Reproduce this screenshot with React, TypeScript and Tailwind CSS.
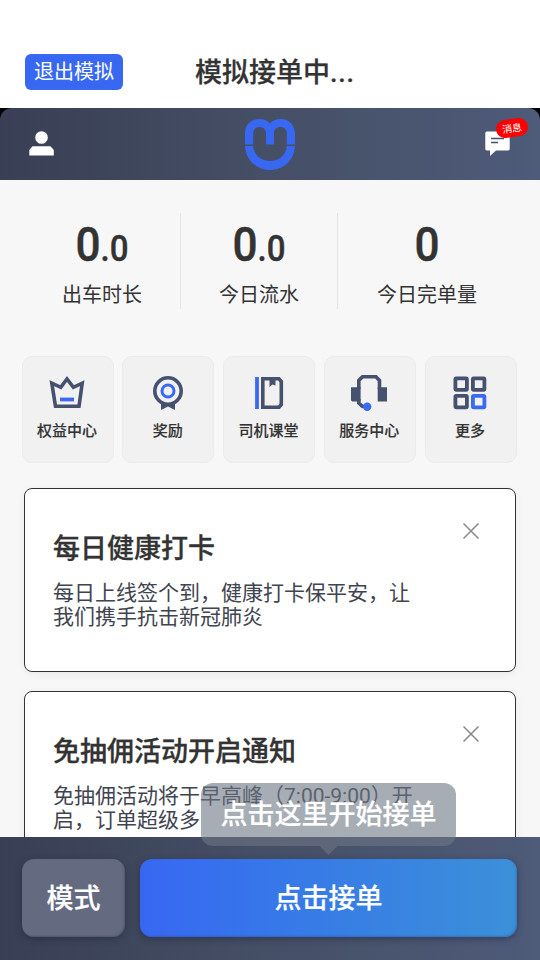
import type { ReactNode } from "react";

const stats = [
  { whole: "0", fraction: ".0", label: "出车时长" },
  { whole: "0", fraction: ".0", label: "今日流水" },
  { whole: "0", fraction: "", label: "今日完单量" },
];

const CrownIcon = () => (
  <svg width="36" height="38" viewBox="0 0 36 38" fill="none">
    <path d="M2.8 10.2L11.8 14.3L18 6L24.4 14.3L33.2 10.2L30 33.200H6.500Z" stroke="#46516f" strokeWidth="3.600" />
    <path d="M11 26.500H25" stroke="#3a69f2" strokeWidth="3.800" />
  </svg>
);

const MedalIcon = () => (
  <svg width="36" height="38" viewBox="0 0 36 38" fill="none">
    <path d="M11 27V37L18 33.500L25 37V27Z" fill="#46516f" />
    <circle cx="18" cy="18" r="13.200" fill="#f1f1f1" stroke="#46516f" strokeWidth="3.600" />
    <circle cx="18" cy="18" r="6" stroke="#3a69f2" strokeWidth="3" />
  </svg>
);

const BookIcon = () => (
  <svg width="36" height="38" viewBox="0 0 36 38" fill="none">
    <path d="M6 4V36" stroke="#3a69f2" strokeWidth="3.800" />
    <path d="M11.800 5.800H28L30.300 8.500V31.500L28 34.200H11.800Z" stroke="#46516f" strokeWidth="3.600" />
    <path d="M18.500 5H24.500V12.500L21.500 11.500L18.500 14Z" fill="#46516f" />
  </svg>
);

const HeadsetIcon = () => (
  <svg width="36" height="38" viewBox="0 0 36 38" fill="none">
    <path d="M7.800 16V7.500L11.500 3.800H25L28.500 7.500V16M7.800 26V30L11.500 33.500H16" stroke="#46516f" strokeWidth="3.600" />
    <path d="M0 14.300H9.600V28.500H1.200L0 27.300ZM26.700 14.300H36V28.500H26.700Z" fill="#46516f" />
    <circle cx="16.200" cy="33.800" r="4.200" fill="#3a69f2" />
  </svg>
);

const GridIcon = () => (
  <svg width="36" height="38" viewBox="0 0 36 38" fill="none" strokeWidth="3.800">
    <rect x="3.400" y="5.400" width="11.500" height="11.500" rx="0.800" stroke="#46516f" />
    <rect x="20.900" y="5.400" width="11.500" height="11.500" rx="0.800" stroke="#46516f" />
    <rect x="3.400" y="22.900" width="11.500" height="11.500" rx="0.800" stroke="#46516f" />
    <rect x="20.900" y="22.900" width="11.500" height="11.500" rx="0.800" stroke="#3a69f2" />
  </svg>
);

const shortcuts: { label: string; icon: ReactNode }[] = [
  { label: "权益中心", icon: <CrownIcon /> },
  { label: "奖励", icon: <MedalIcon /> },
  { label: "司机课堂", icon: <BookIcon /> },
  { label: "服务中心", icon: <HeadsetIcon /> },
  { label: "更多", icon: <GridIcon /> },
];

const notices = [
  { title: "每日健康打卡", lines: ["每日上线签个到，健康打卡保平安，让", "我们携手抗击新冠肺炎"] },
  { title: "免抽佣活动开启通知", lines: ["免抽佣活动将于早高峰（7:00-9:00）开", "启，订单超级多"] },
];

const TopBar = () => (
  <div className="h-[108px] shrink-0 bg-white flex items-start pl-[25px] pt-[54px]">
    <button className="w-[98px] h-9 rounded-md bg-[#3868f2] text-white text-[20px] leading-9 whitespace-nowrap">
      退出模拟
    </button>
    <h1 className="ml-[72px] text-[27px] leading-[38px] font-medium whitespace-nowrap [-webkit-text-stroke:0.25px]">
      模拟接单中<span className="tracking-[0.8px]">...</span>
    </h1>
  </div>
);

const Header = () => (
  <div className="shrink-0 bg-black">
    <header className="h-[72px] rounded-t-[12px] bg-linear-to-r from-[#393f54] via-[#454f66] to-[#4e5b79] flex justify-between pl-[29px] pr-[29px]">
      <svg className="mt-[23px]" width="25" height="25" viewBox="0 0 25 25" fill="#fff">
        <circle cx="12.500" cy="6.500" r="6.300" />
        <path d="M0.300 24.500V19L3.500 15.300H21.500L24.800 19V24.500Z" />
      </svg>
      <svg className="mt-[10px]" width="52" height="54" viewBox="0 0 52 54" fill="#3868f2">
        <path d="M1 26.500V15.500C1 7 7 1 15.500 1C20 1 23.500 2.500 26 5.500C28.500 2.500 32 1 36.500 1C45 1 51 7 51 15.500V26.500H42.800V15.500C42.800 11.500 40 9 36.500 9C32.500 9 30 11.500 30 15.500V26.500H22V15.500C22 11.500 19.500 9 15.500 9C12 9 9.200 11.500 9.200 15.500V26.500Z" />
        <path d="M1 28H9.200C10 37 17 43 26 43S42 37 42.800 28H51C50 43 39 52 26 52S2 43 1 28Z" />
      </svg>
      <div className="relative mt-[23px]">
        <svg width="26" height="26" viewBox="0 0 26 26" fill="none">
          <path d="M1.500 0.500H23.500L24.700 1.500V18.500L23.500 19.500H11L5 25V19.500H1.500L0.300 18.500V1.500Z" fill="#fff" />
          <path d="M6 7.500H19M6 11.500H13" stroke="#46516f" strokeWidth="1.500" />
        </svg>
        <span className="absolute left-[11px] top-[-12px] w-8 h-[18px] rounded-full bg-[#fe0000] text-white text-[10px] leading-[20px] text-center -rotate-8">
          消息
        </span>
      </div>
    </header>
  </div>
);

const Stats = () => (
  <section className="mt-[33px] mx-6 h-24 grid grid-cols-[157px_157px_178px] divide-x divide-[#e5e5e5] text-center">
    {stats.map((stat) => (
      <div key={stat.label}>
        <p className="mt-[2px] h-[60px] leading-[60px] font-medium font-[Roboto] whitespace-nowrap scale-x-[0.92] [-webkit-text-stroke:0.4px]">
          <span className="text-[48px]">{stat.whole}</span>
          <span className="text-[36px]">{stat.fraction}</span>
        </p>
        <p className="mt-[6px] text-[20px] leading-7">{stat.label}</p>
      </div>
    ))}
  </section>
);

const Shortcuts = () => (
  <nav className="mt-[47px] pl-[21.6px] pr-[23.4px] flex justify-between">
    {shortcuts.map(({ label, icon }) => (
      <button
        key={label}
        className="w-[92px] h-[107px] rounded-[10px] border border-[#ebebeb] bg-[#f1f1f1] flex flex-col items-center pt-4 pr-px"
      >
        {icon}
        <span className="mt-[8px] text-[15px] leading-[24px] font-medium [-webkit-text-stroke:0.15px]">{label}</span>
      </button>
    ))}
  </nav>
);

const Notice = ({ title, lines }: { title: string; lines: string[] }) => (
  <article className="h-[184px] shrink-0 rounded-lg border border-[#333] bg-white pl-[28px] pr-[36px] shadow-[0_2px_8px_rgba(0,0,0,0.06)] flex justify-between">
    <div className="pt-[40px] whitespace-nowrap">
      <h2 className="text-[27px] leading-10 font-medium [-webkit-text-stroke:0.3px]">{title}</h2>
      <p className="mt-[12px] text-[21px] leading-6 text-[#41444f]">
        {lines.map((line) => (
          <span key={line} className="block">
            {line}
          </span>
        ))}
      </p>
    </div>
    <svg className="mt-[34px] shrink-0" width="16" height="16" viewBox="0 0 16 16" stroke="#888" strokeWidth="1.500">
      <path d="M0.500 0.500L15.500 15.500M15.500 0.500L0.500 15.500" />
    </svg>
  </article>
);

const BottomBar = () => (
  <footer className="relative h-[123px] shrink-0 bg-linear-to-r from-[#393f54] via-[#454f66] to-[#4e5b79] pt-[22px] pl-[22px] pr-[23px] flex gap-[15px] text-white text-[27px] leading-[80px] font-medium [-webkit-text-stroke:0.2px]">
    <button className="w-[103px] h-[78px] rounded-xl bg-[#646b80] shadow-[0_2px_6px_rgba(30,36,60,0.5),inset_-1px_-1px_2px_rgba(50,60,90,0.4)]">
      模式
    </button>
    <button className="flex-1 h-[78px] rounded-xl bg-linear-to-r from-[#3767f2] to-[#3c90d8] shadow-[0_2px_6px_rgba(30,36,60,0.5),inset_-1px_-1px_2px_rgba(40,80,150,0.4)]">
      点击接单
    </button>
    {/* hint bubble above the order button */}
    <div className="absolute left-[201px] top-[-54px] w-[255px]">
      <div className="h-[63px] rounded-xl bg-[rgba(108,118,131,0.6)] leading-[64px] text-center whitespace-nowrap">
        点击这里开始接单
      </div>
      <div className="mx-auto w-[18px] h-[9px] bg-[rgba(108,118,131,0.6)] [clip-path:polygon(0_0,100%_0,50%_100%)]" />
    </div>
  </footer>
);

export default function App() {
  return (
    <div className="w-[540px] h-[960px] overflow-hidden flex flex-col bg-[#f7f7f7] text-[#333] font-[Roboto,'Noto_Sans_CJK_SC',sans-serif]">
      <TopBar />
      <Header />
      <main className="flex-1 min-h-0 overflow-hidden">
        <Stats />
        <Shortcuts />
        <div className="mt-[25px] pl-6 pr-6 flex flex-col gap-[19px]">
          {notices.map((notice) => (
            <Notice key={notice.title} {...notice} />
          ))}
        </div>
      </main>
      <BottomBar />
    </div>
  );
}
